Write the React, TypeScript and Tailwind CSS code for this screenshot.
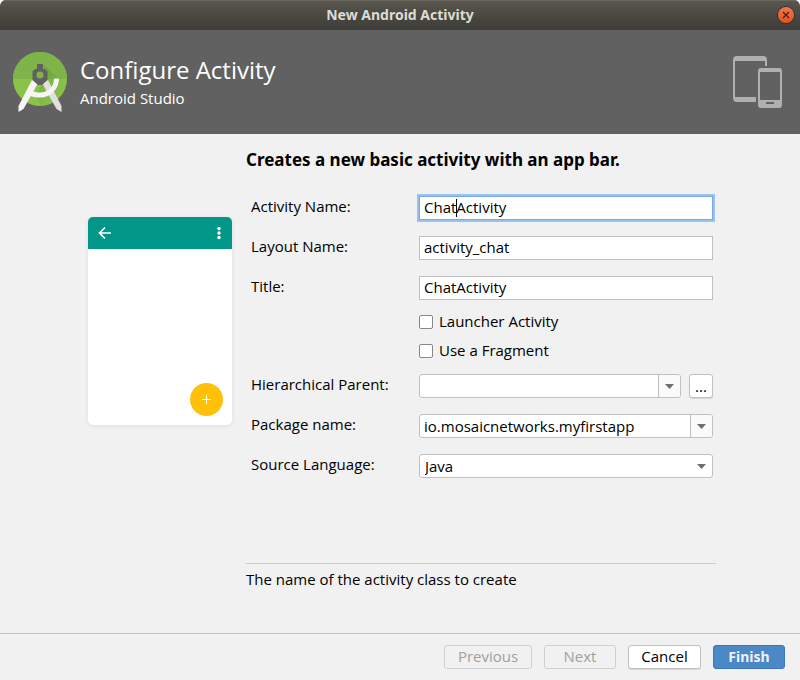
import { useState, type ReactNode } from "react";

function StudioLogo() {
  return (
    <svg viewBox="0 0 54 60" className="h-[60px] w-[54px] shrink-0" aria-hidden="true">
      <defs>
        <clipPath id="disc">
          <circle cx="27" cy="27" r="27" />
        </clipPath>
        <linearGradient id="shade" x1="0" y1="0" x2="1" y2="1">
          <stop offset="0" stopColor="#558b2f" stopOpacity="0.5" />
          <stop offset="0.8" stopColor="#558b2f" stopOpacity="0" />
        </linearGradient>
      </defs>
      <g clipPath="url(#disc)">
        <rect width="54" height="54" fill="#8bc34a" />
        <rect width="54" height="27" fill="#7fb548" />
        <path d="M30 12L54 34V54H28L22 44L34 24Z" fill="url(#shade)" />
      </g>
      <path d="M29 31L35 28L48.5 54V60L43.5 57Z" fill="#e0e0e0" />
      <path d="M41 26.5H46C46 38 37 45.5 27 45.500C23 45.5 19 45 15 43L18 38C21 40 24 40.5 27 40.500C35 40.5 41 35 41 26.5Z" fill="#f5f5f5" />
      <path d="M19 28L25 31L10.5 57L5.5 60V54Z" fill="#f5f5f5" />
      <path
        fillRule="evenodd"
        d="M24 12H30V17H32L34.500 19.500V28L29 33H25L19.500 28V19.500L22 17H24ZM27 19.500A3.500 3.500 0 1 0 27 26.500A3.500 3.500 0 1 0 27 19.500Z"
        fill="#616161"
      />
    </svg>
  );
}

function DevicesIcon() {
  return (
    <svg viewBox="0 0 50 52" className="h-[52px] w-[50px] shrink-0" aria-hidden="true">
      <path
        fillRule="evenodd"
        d="M4 0H30A4 4 0 0 1 34 4V10H32V5H2V41H23V46H4A4 4 0 0 1 0 42V4A4 4 0 0 1 4 0Z"
        fill="#b0b0b1"
      />
      <path
        fillRule="evenodd"
        d="M28 12H46A3 3 0 0 1 49 15V49A3 3 0 0 1 46 52H28A3 3 0 0 1 25 49V15A3 3 0 0 1 28 12ZM27 16V44H47V16ZM33 46V48H41V46Z"
        fill="#b0b0b1"
      />
    </svg>
  );
}

function Arrow() {
  return (
    <svg viewBox="0 0 9 5" className="h-[5px] w-[9px]" aria-hidden="true">
      <path d="M0 0H9L4.5 5Z" fill="#6e6e6e" />
    </svg>
  );
}

function Row({ id, label, children }: { id: string; label: string; children: ReactNode }) {
  return (
    <div className="flex h-6 items-start">
      <label htmlFor={id} className="w-[168px] shrink-0 leading-5">
        {label}
      </label>
      <div className="flex min-w-0 flex-1 gap-2">{children}</div>
    </div>
  );
}

function Check({ label }: { label: string }) {
  return (
    <label className="flex h-[21px] items-center gap-[6px]">
      <input
        type="checkbox"
        className="size-[14px] appearance-none rounded-[2px] border border-[#878787] bg-white checked:bg-[#4a86c7]"
      />
      {label}
    </label>
  );
}

function Combo({ id, value }: { id: string; value: string }) {
  return (
    <div className="flex h-6 min-w-0 flex-1 overflow-hidden rounded-[3px] border border-[#c0c0c0] bg-white">
      <input id={id} defaultValue={value} className="min-w-0 flex-1 px-1 outline-none" />
      <button
        type="button"
        aria-label="Show choices"
        className="flex w-[22px] items-center justify-center border-l border-[#c0c0c0] bg-[#fafafa]"
      >
        <Arrow />
      </button>
    </div>
  );
}

const textBox = "h-6 w-full min-w-0 border bg-white px-1 pb-[2px] outline-none";

function Preview() {
  return (
    <div className="flex h-[208px] w-36 flex-col overflow-hidden rounded-[5px] bg-white shadow-[0_1px_4px_rgba(0,0,0,0.08)]">
      <div className="flex h-8 items-center justify-between bg-[#009688] pr-[11px] pl-[10px]">
        <svg viewBox="0 0 14 14" className="size-[14px]" aria-hidden="true">
          <path d="M7 1.5L1.5 7L7 12.5M1.5 7H13" fill="none" stroke="white" strokeWidth="1.7" />
        </svg>
        <svg viewBox="0 0 4 14" className="h-[14px] w-1" aria-hidden="true">
          <circle cx="2" cy="2.5" r="1.7" fill="white" />
          <circle cx="2" cy="7" r="1.7" fill="white" />
          <circle cx="2" cy="11.5" r="1.7" fill="white" />
        </svg>
      </div>
      <div className="flex flex-1 items-end justify-end pr-[9px] pb-[9px]">
        <svg viewBox="0 0 33 33" className="size-[33px]" aria-hidden="true">
          <circle cx="16.5" cy="16.5" r="16.5" fill="#ffc107" />
          <path d="M12 16.5H21M16.5 12V21" stroke="white" strokeWidth="1.1" />
        </svg>
      </div>
    </div>
  );
}

export default function App() {
  const [name, setName] = useState("ChatActivity");
  return (
    <div className="bg-white">
      <div className="flex min-h-screen flex-col overflow-hidden rounded-t-[6px] bg-[#f1f1f1] font-['Open_Sans','Noto_Sans',sans-serif] text-[15px] text-black">
        <header>
          <div className="flex h-[30px] items-center bg-linear-to-b from-[#59574e] to-[#3d3c37] px-[6px] shadow-[inset_0_1px_0_#6b685e]">
            <div className="flex-1 pl-4 text-center font-['Noto_Sans',sans-serif] text-sm font-bold text-[#dfdbd2]">
              New Android Activity
            </div>
            <button
              type="button"
              aria-label="Close"
              className="flex size-4 items-center justify-center rounded-full bg-linear-to-b from-[#f4764e] to-[#e5501f] ring-1 ring-[#33322e]"
            >
              <svg viewBox="0 0 8 8" className="size-2" aria-hidden="true">
                <path d="M1 1L7 7M7 1L1 7" stroke="#4a2415" strokeWidth="1.3" />
              </svg>
            </button>
          </div>
          <div className="flex h-[104px] items-center bg-[#616161] pr-[17px] pl-[13px] text-white">
            <StudioLogo />
            <div className="ml-[13px] flex-1">
              <h1 className="text-2xl leading-8">Configure Activity</h1>
              <p className="leading-6">Android Studio</p>
            </div>
            <DevicesIcon />
          </div>
        </header>

        <main className="flex flex-1">
          <div className="flex w-[246px] shrink-0 justify-end pt-[83px] pr-[14px]">
            <Preview />
          </div>
          <div className="mr-[84px] flex min-w-0 flex-1 flex-col pt-[14px] pb-11">
            <h2 className="font-['Noto_Sans',sans-serif] text-[17px] leading-6 font-bold">
              Creates a new basic activity with an app bar.
            </h2>
            <form className="mt-6 flex flex-col gap-4 pr-[3px] pl-[5px]" onSubmit={(e) => e.preventDefault()}>
              <Row id="activity-name" label="Activity Name:">
                <div className="relative flex-1">
                  <input
                    id="activity-name"
                    value={name}
                    onChange={(e) => setName(e.target.value)}
                    className={`${textBox} border-[#7ba7d9] ring-2 ring-[#97c3f3]`}
                  />
                  <span className="absolute top-[3px] left-[37px] h-[18px] w-px bg-black" />
                </div>
              </Row>
              <Row id="layout-name" label="Layout Name:">
                <input id="layout-name" defaultValue="activity_chat" className={`${textBox} border-[#c0c0c0]`} />
              </Row>
              <Row id="title" label="Title:">
                <input id="title" defaultValue="ChatActivity" className={`${textBox} border-[#c0c0c0]`} />
              </Row>
              <div className="-mt-[5px] flex flex-col gap-2 pl-[168px]">
                <Check label="Launcher Activity" />
                <Check label="Use a Fragment" />
              </div>
              <div className="-mt-[3px] flex flex-col gap-4">
                <Row id="parent" label="Hierarchical Parent:">
                  <Combo id="parent" value="" />
                  <button
                    type="button"
                    aria-label="Browse"
                    className="h-6 w-6 rounded-[3px] border border-[#c0c0c0] bg-white leading-4 shadow-[0_1px_0_#d8d8d8]"
                  >
                    ...
                  </button>
                </Row>
                <Row id="package" label="Package name:">
                  <Combo id="package" value="io.mosaicnetworks.myfirstapp" />
                </Row>
                <Row id="language" label="Source Language:">
                  <div className="relative flex-1">
                    <select
                      id="language"
                      className="h-6 w-full appearance-none rounded-[3px] border border-[#c0c0c0] bg-white px-[5px] pb-[2px] outline-none"
                    >
                      <option>Java</option>
                      <option>Kotlin</option>
                    </select>
                    <span className="pointer-events-none absolute inset-y-0 right-[7px] flex items-center">
                      <Arrow />
                    </span>
                  </div>
                </Row>
              </div>
            </form>
            <p className="mt-auto border-t border-[#cdcdcd] pt-[5px] leading-5">The name of the activity class to create</p>
          </div>
        </main>

        <footer className="flex h-[47px] items-center justify-end gap-3 border-t border-[#c1c1c1] px-[15px]">
          <button type="button" disabled className="h-6 w-[88px] rounded-[3px] border border-[#cfcfcf] pb-[2px] leading-5 text-[#a0a0a0]">
            Previous
          </button>
          <button type="button" disabled className="h-6 w-[72px] rounded-[3px] border border-[#cfcfcf] pb-[2px] leading-5 text-[#a0a0a0]">
            Next
          </button>
          <button type="button" className="h-6 w-[73px] rounded-[3px] border border-[#bfbfbf] bg-white pb-[2px] leading-5 shadow-[0_1px_0_#d8d8d8]">
            Cancel
          </button>
          <button
            type="button"
            className="h-6 w-[72px] rounded-[3px] border border-[#3d75b8] bg-[#4a88c7] font-['Noto_Sans',sans-serif] text-sm leading-5 font-bold text-[#f0f0f0]"
          >
            Finish
          </button>
        </footer>
      </div>
    </div>
  );
}
